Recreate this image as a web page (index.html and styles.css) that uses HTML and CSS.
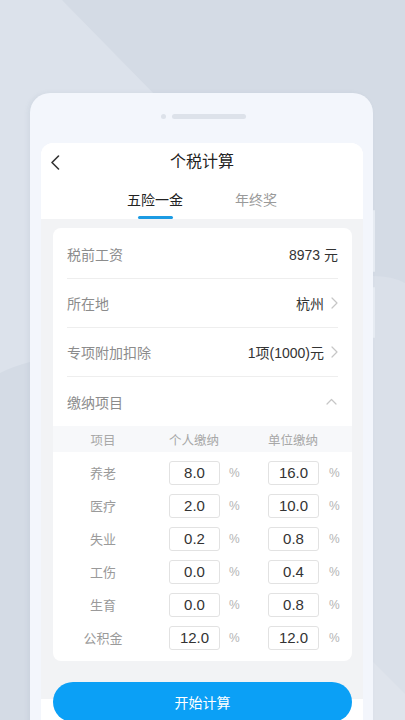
FILE: index.html
```html
<!DOCTYPE html>
<html lang="zh-CN">
<head>
<meta charset="utf-8">
<title>个税计算</title>
<link rel="stylesheet" href="styles.css">
</head>
<body>
<div class="stage">
  <svg class="backdrop" width="405" height="720" viewBox="0 0 405 720" aria-hidden="true">
    <rect width="405" height="720" fill="#d4dbe5"/>
    <path d="M0 0 H62 L160 100 L60 300 L30 362 Q14 366 0 373 Z" fill="#dce2eb"/>
    <path d="M373 276 Q392 276 405 283 V720 H373 Z" fill="#dae0e9"/>
    <path d="M373 662 L405 694 V720 H373 Z" fill="#dfe4ec"/>
  </svg>

  <div class="phone">
    <span class="side-btn side-btn-a"></span>
    <span class="side-btn side-btn-b"></span>
    <div class="speaker"><span class="cam"></span><span class="grille"></span></div>

    <div class="screen">
      <header class="head">
        <div class="titlebar">
          <span class="back">
            <svg width="10" height="15" viewBox="0 0 10 15"><path d="M8.5 1 L2 7.5 L8.5 14" fill="none" stroke="#333" stroke-width="1.6" stroke-linecap="round" stroke-linejoin="round"/></svg>
          </span>
          <h1 class="title">个税计算</h1>
          <span></span>
        </div>
        <nav class="tabs">
          <div class="tab active"><span>五险一金</span><i class="bar"></i></div>
          <div class="tab"><span>年终奖</span></div>
        </nav>
      </header>

      <main class="main">
        <section class="card">
          <div class="row">
            <span class="label">税前工资</span>
            <span class="value">8973 元</span>
          </div>
          <div class="row">
            <span class="label">所在地</span>
            <span class="value"><span class="cjk">杭州</span><svg class="chev" width="7" height="12" viewBox="0 0 7 12"><path d="M1 1 L6 6 L1 11" fill="none" stroke="#c6c6c6" stroke-width="1.2" stroke-linecap="round" stroke-linejoin="round"/></svg></span>
          </div>
          <div class="row">
            <span class="label">专项附加扣除</span>
            <span class="value">1项(1000)元<svg class="chev" width="7" height="12" viewBox="0 0 7 12"><path d="M1 1 L6 6 L1 11" fill="none" stroke="#c6c6c6" stroke-width="1.2" stroke-linecap="round" stroke-linejoin="round"/></svg></span>
          </div>
          <div class="row last">
            <span class="label">缴纳项目</span>
            <svg class="caret" width="11" height="7" viewBox="0 0 11 7"><path d="M1 6 L5.5 1.5 L10 6" fill="none" stroke="#c6c6c6" stroke-width="1.2" stroke-linecap="round" stroke-linejoin="round"/></svg>
          </div>

          <div class="thead">
            <span class="c-name">项目</span>
            <span class="c-own">个人缴纳</span>
            <span class="c-unit">单位缴纳</span>
          </div>
          <div class="tbody">
            <div class="trow"><span class="c-name">养老</span><span class="box b1">8.0</span><span class="pct p1">%</span><span class="box">16.0</span><span class="pct p2">%</span></div>
            <div class="trow"><span class="c-name">医疗</span><span class="box b1">2.0</span><span class="pct p1">%</span><span class="box">10.0</span><span class="pct p2">%</span></div>
            <div class="trow"><span class="c-name">失业</span><span class="box b1">0.2</span><span class="pct p1">%</span><span class="box">0.8</span><span class="pct p2">%</span></div>
            <div class="trow"><span class="c-name">工伤</span><span class="box b1">0.0</span><span class="pct p1">%</span><span class="box">0.4</span><span class="pct p2">%</span></div>
            <div class="trow"><span class="c-name">生育</span><span class="box b1">0.0</span><span class="pct p1">%</span><span class="box">0.8</span><span class="pct p2">%</span></div>
            <div class="trow"><span class="c-name">公积金</span><span class="box b1">12.0</span><span class="pct p1">%</span><span class="box">12.0</span><span class="pct p2">%</span></div>
          </div>
        </section>
      </main>

      <footer class="foot">
        <button class="calc">开始计算</button>
      </footer>
    </div>
  </div>
</div>
</body>
</html>
```

FILE: styles.css
```css
* { box-sizing: border-box; }

html, body {
  margin: 0;
  padding: 0;
}

body {
  font-family: "Liberation Sans", "Noto Sans CJK SC", sans-serif;
  color: #333;
  background: #d4dbe5;
}

.stage {
  position: relative;
  width: 405px;
  height: 720px;
  overflow: hidden;
  padding-top: 93px;
  padding-left: 30px;
}

.backdrop {
  position: absolute;
  left: 0;
  top: 0;
  z-index: 0;
}

/* phone frame */
.phone {
  position: relative;
  z-index: 1;
  width: 343px;
  height: 660px;
  background: #f3f6fc;
  border-radius: 20px 20px 0 0;
  padding-top: 21px;
  box-shadow: -2px 0 4px rgba(120, 135, 160, 0.10);
}

.side-btn {
  position: absolute;
  right: -2px;
  width: 2px;
  background: #e6ebf2;
  border-radius: 1px;
}
.side-btn-a { top: 117px; height: 62px; }
.side-btn-b { top: 194px; height: 51px; }

.speaker {
  display: flex;
  justify-content: center;
  align-items: center;
  gap: 6px;
  height: 5px;
  margin-left: 3px;
}
.cam {
  width: 5px;
  height: 5px;
  border-radius: 50%;
  background: #dde2ea;
}
.grille {
  width: 74px;
  height: 5px;
  border-radius: 3px;
  background: #dde2ea;
}

/* screen */
.screen {
  margin: 24px 10px 0 11px;
  border-radius: 12px 12px 0 0;
  overflow: hidden;
  background: #fff;
}

.head {
  background: #fff;
  height: 76px;
}

.titlebar {
  display: grid;
  grid-template-columns: 40px 1fr 40px;
  align-items: center;
  height: 38px;
}
.back {
  display: flex;
  align-items: center;
  padding-left: 9px;
  padding-top: 1px;
}
.title {
  margin: 0;
  text-align: center;
  font-size: 16px;
  font-weight: 400;
  color: #222;
  line-height: 38px;
}

.tabs {
  display: flex;
  justify-content: center;
  gap: 52px;
  height: 38px;
}
.tab {
  display: flex;
  flex-direction: column;
  align-items: center;
  padding-top: 9px;
  font-size: 14px;
  line-height: 20px;
  color: #9a9a9a;
}
.tab.active { color: #222; }
.tab .bar {
  display: block;
  margin-top: auto;
  width: 35px;
  height: 3px;
  border-radius: 2px;
  background: #1c9be3;
}

/* main */
.main {
  background: #f2f3f5;
  padding: 9px 11px 0 12px;
}

.card {
  background: #fff;
  border-radius: 8px;
  padding-top: 2px;
}

.row {
  display: flex;
  align-items: center;
  justify-content: space-between;
  height: 49px;
  margin: 0 14px;
  border-bottom: 1px solid #eeeeee;
  font-size: 14px;
}
.row.last { border-bottom: none; }

.label { color: #8c8c8c; }

.value {
  display: flex;
  align-items: center;
  color: #333;
}
.cjk {
  font-family: "Noto Sans CJK SC", sans-serif;
  color: #333;
}
.chev { margin-left: 7px; }
.caret { margin-right: 1px; }

.thead {
  display: flex;
  align-items: center;
  height: 26px;
  background: #f7f8fa;
  font-size: 12.5px;
  color: #a8a8a8;
}
.thead .c-name { width: 100px; text-align: center; }
.thead .c-own  { width: 82px; text-align: center; }
.thead .c-unit { width: 116px; text-align: center; }

.tbody {
  padding: 4px 0 7px;
}

.trow {
  display: flex;
  align-items: center;
  height: 33px;
}
.trow .c-name {
  width: 100px;
  text-align: center;
  font-size: 13px;
  color: #9a9a9a;
}

.box {
  width: 51px;
  height: 24px;
  border: 1px solid #e2e2e2;
  border-radius: 3px;
  font-size: 15px;
  line-height: 22px;
  text-align: center;
  color: #333;
}
.box.b1 { margin-left: 16px; }

.pct {
  font-size: 12px;
  color: #b4b4b4;
}
.pct.p1 { margin-left: 9px; width: 39px; }
.pct.p2 { margin-left: 10px; }

/* footer */
.foot {
  padding: 21px 11px 20px 12px;
  background: linear-gradient(to bottom, #f2f3f5 38px, #fff 38px);
}

.calc {
  display: block;
  width: 100%;
  height: 40px;
  border: none;
  border-radius: 20px;
  background: #0ba0f6;
  color: #fff;
  font-family: "Liberation Sans", "Noto Sans CJK SC", sans-serif;
  font-size: 14px;
  padding: 0;
}
```
